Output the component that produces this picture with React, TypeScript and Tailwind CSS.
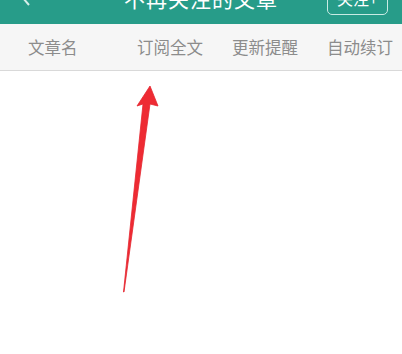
const tabs = ["文章名", "订阅全文", "更新提醒", "自动续订"];
const tabX = ["pl-[28px] w-[137px]", "w-[95px]", "w-[95px]", "w-[75px]"];

export default function App() {
  return (
    <div
      className="relative w-[402px] h-[354px] bg-white overflow-hidden"
      style={{ fontFamily: '"Noto Sans CJK SC", "Noto Sans", sans-serif' }}
    >
      {/* Header (scrolled up, cut at top) */}
      <div className="h-[24px] overflow-hidden bg-[#279c89]">
        <div className="relative h-[48px] -mt-[26px] flex items-center justify-center">
          <svg className="absolute left-[20px] top-[16px]" width="12" height="16" viewBox="0 0 12 16">
            <path d="M9 1 L3 8 L9 15" fill="none" stroke="#d6eee9" strokeWidth="2" />
          </svg>
          <span className="text-[21px] text-white leading-none tracking-[1px]">不再关注的文章</span>
          <div className="absolute right-[14px] top-[6px] w-[61px] h-[35px] rounded-[5px] border-[1.5px] border-[#c9ebe4] flex items-center justify-center">
            <span className="text-[16px] text-white leading-none">关注+</span>
          </div>
        </div>
      </div>

      {/* Tab bar */}
      <div className="h-[47px] bg-[#f6f6f6] border-b-[1.5px] border-[#d9d9d9] flex items-center">
        {tabs.map((t, i) => (
          <div key={t} className={`${tabX[i]} shrink-0 whitespace-nowrap text-[16.5px] text-[#8c8c8c] leading-none`}>
            {t}
          </div>
        ))}
      </div>

      {/* Red annotation arrow */}
      <svg className="absolute left-0 top-0" width="402" height="354" viewBox="0 0 402 354">
        <path
          d="M150 86 L158 106 L150 104 L124 292 L123.5 292 L143 104 L137 106 Z"
          fill="#ee2b33"
          stroke="#e52630"
          strokeWidth="0.8"
          strokeLinejoin="round"
        />
      </svg>
    </div>
  );
}
